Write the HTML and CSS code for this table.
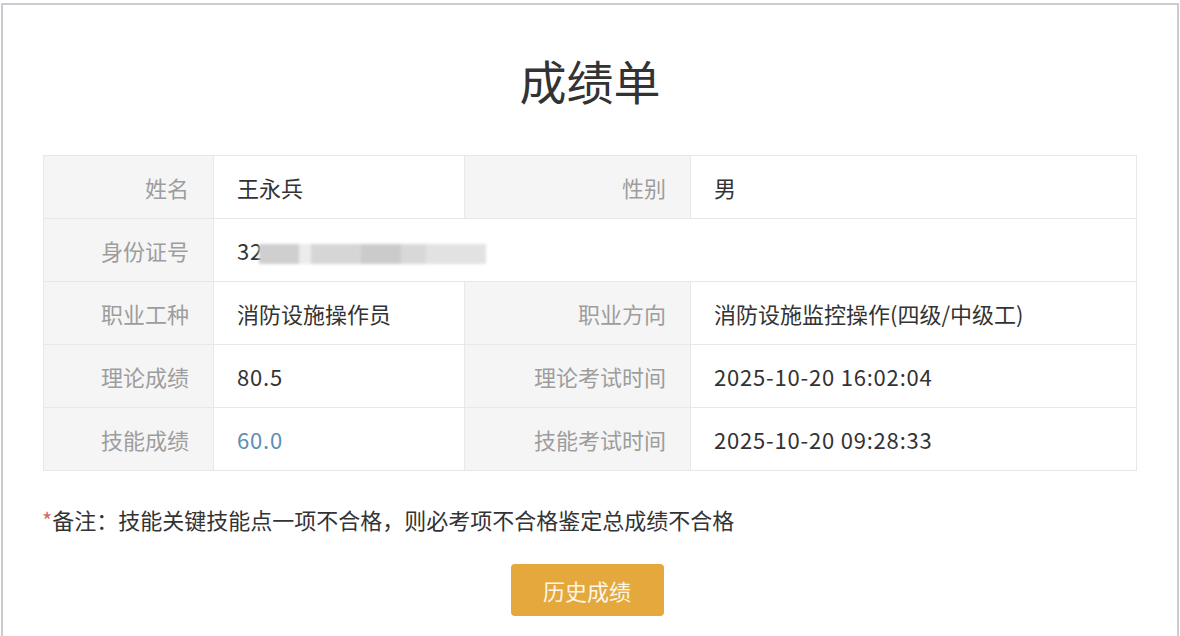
FILE: index.html
```html
<!DOCTYPE html>
<html lang="zh-CN">
<head>
<meta charset="utf-8">
<title>成绩单</title>
<link rel="stylesheet" href="styles.css">
</head>
<body>
<div class="page">
  <div class="card">
    <h1 class="title">成绩单</h1>
    <table class="grid">
      <colgroup>
        <col class="c1"><col class="c2"><col class="c3"><col class="c4">
      </colgroup>
      <tr>
        <th>姓名</th><td>王永兵</td>
        <th>性别</th><td>男</td>
      </tr>
      <tr>
        <th>身份证号</th>
        <td colspan="3" class="id-cell"><span class="num">32</span><span class="blur"><i class="b1"></i><i class="b2"></i><i class="b3"></i><i class="b4"></i><i class="b5"></i><i class="b6"></i></span></td>
      </tr>
      <tr>
        <th>职业工种</th><td>消防设施操作员</td>
        <th>职业方向</th><td>消防设施监控操作(四级/中级工)</td>
      </tr>
      <tr>
        <th>理论成绩</th><td class="num">80.5</td>
        <th>理论考试时间</th><td class="num">2025-10-20 16:02:04</td>
      </tr>
      <tr>
        <th>技能成绩</th><td class="num blue">60.0</td>
        <th>技能考试时间</th><td class="num">2025-10-20 09:28:33</td>
      </tr>
    </table>
    <p class="note"><span class="star">*</span>备注：技能关键技能点一项不合格，则必考项不合格鉴定总成绩不合格</p>
    <div class="actions">
      <button class="btn" type="button">历史成绩</button>
    </div>
  </div>
</div>
</body>
</html>
```

FILE: styles.css
```css
html, body {
  margin: 0;
  padding: 0;
  background: #ffffff;
}
body {
  font-family: "Noto Sans CJK SC", "Noto Sans", sans-serif;
  color: #333;
}
.page {
  padding: 3px 1px 0 1px;
  width: 1178px;
  height: 633px;
  overflow: hidden;
}
.card {
  border: 2px solid #c9cdd1;
  border-bottom: none;
  height: 640px;
  box-sizing: border-box;
  padding: 0 40px;
}
.title {
  margin: 0;
  padding-top: 46px;
  height: 104px;
  box-sizing: border-box;
  text-align: center;
  font-size: 47px;
  font-weight: 400;
  line-height: 58px;
  color: #333;
}
.grid {
  border-collapse: collapse;
  width: 1094px;
  margin-top: 46px;
  table-layout: fixed;
  border: 1px solid #e6e6e6;
}
.c1 { width: 170px; }
.c2 { width: 251px; }
.c3 { width: 226px; }
.c4 { width: auto; }
.grid th, .grid td {
  height: 62px;
  border: 1px solid #e8e8e8;
  font-size: 22px;
  font-weight: 400;
  padding: 0;
  white-space: nowrap;
}
.grid th {
  background: #f5f5f5;
  color: #9d9d9d;
  text-align: right;
  padding-right: 24px;
}
.grid td {
  background: #fff;
  color: #333;
  text-align: left;
  padding-left: 23px;
}
.grid .num {
  letter-spacing: 0.8px;
}
.grid td.blue {
  color: #5b8fb1;
}
.blur {
  display: inline-flex;
  vertical-align: middle;
  filter: blur(1.5px);
  margin-left: -4px;
}
.blur i {
  display: block;
  height: 20px;
}
.b1 { width: 40px; background: #cfcfcf; }
.b2 { width: 12px; background: #ececec; }
.b3 { width: 50px; background: #d6d6d6; }
.b4 { width: 40px; background: #cbcbcb; }
.b5 { width: 25px; background: #d8d8d8; }
.b6 { width: 60px; background: #e2e2e2; }
.note {
  margin: 34px 0 0 0;
  font-size: 22px;
  line-height: 28px;
  color: #333;
  margin-left: -1px;
}
.star {
  color: #d46a6a;
}
.actions {
  display: flex;
  justify-content: center;
  margin-top: 31px;
}
.btn {
  width: 153px;
  height: 52px;
  border: none;
  border-radius: 4px;
  background: #e4a83c;
  color: #fdf6e8;
  font-family: "Noto Sans CJK SC", "Noto Sans", sans-serif;
  font-size: 22px;
  margin-left: -6px;
}
```
